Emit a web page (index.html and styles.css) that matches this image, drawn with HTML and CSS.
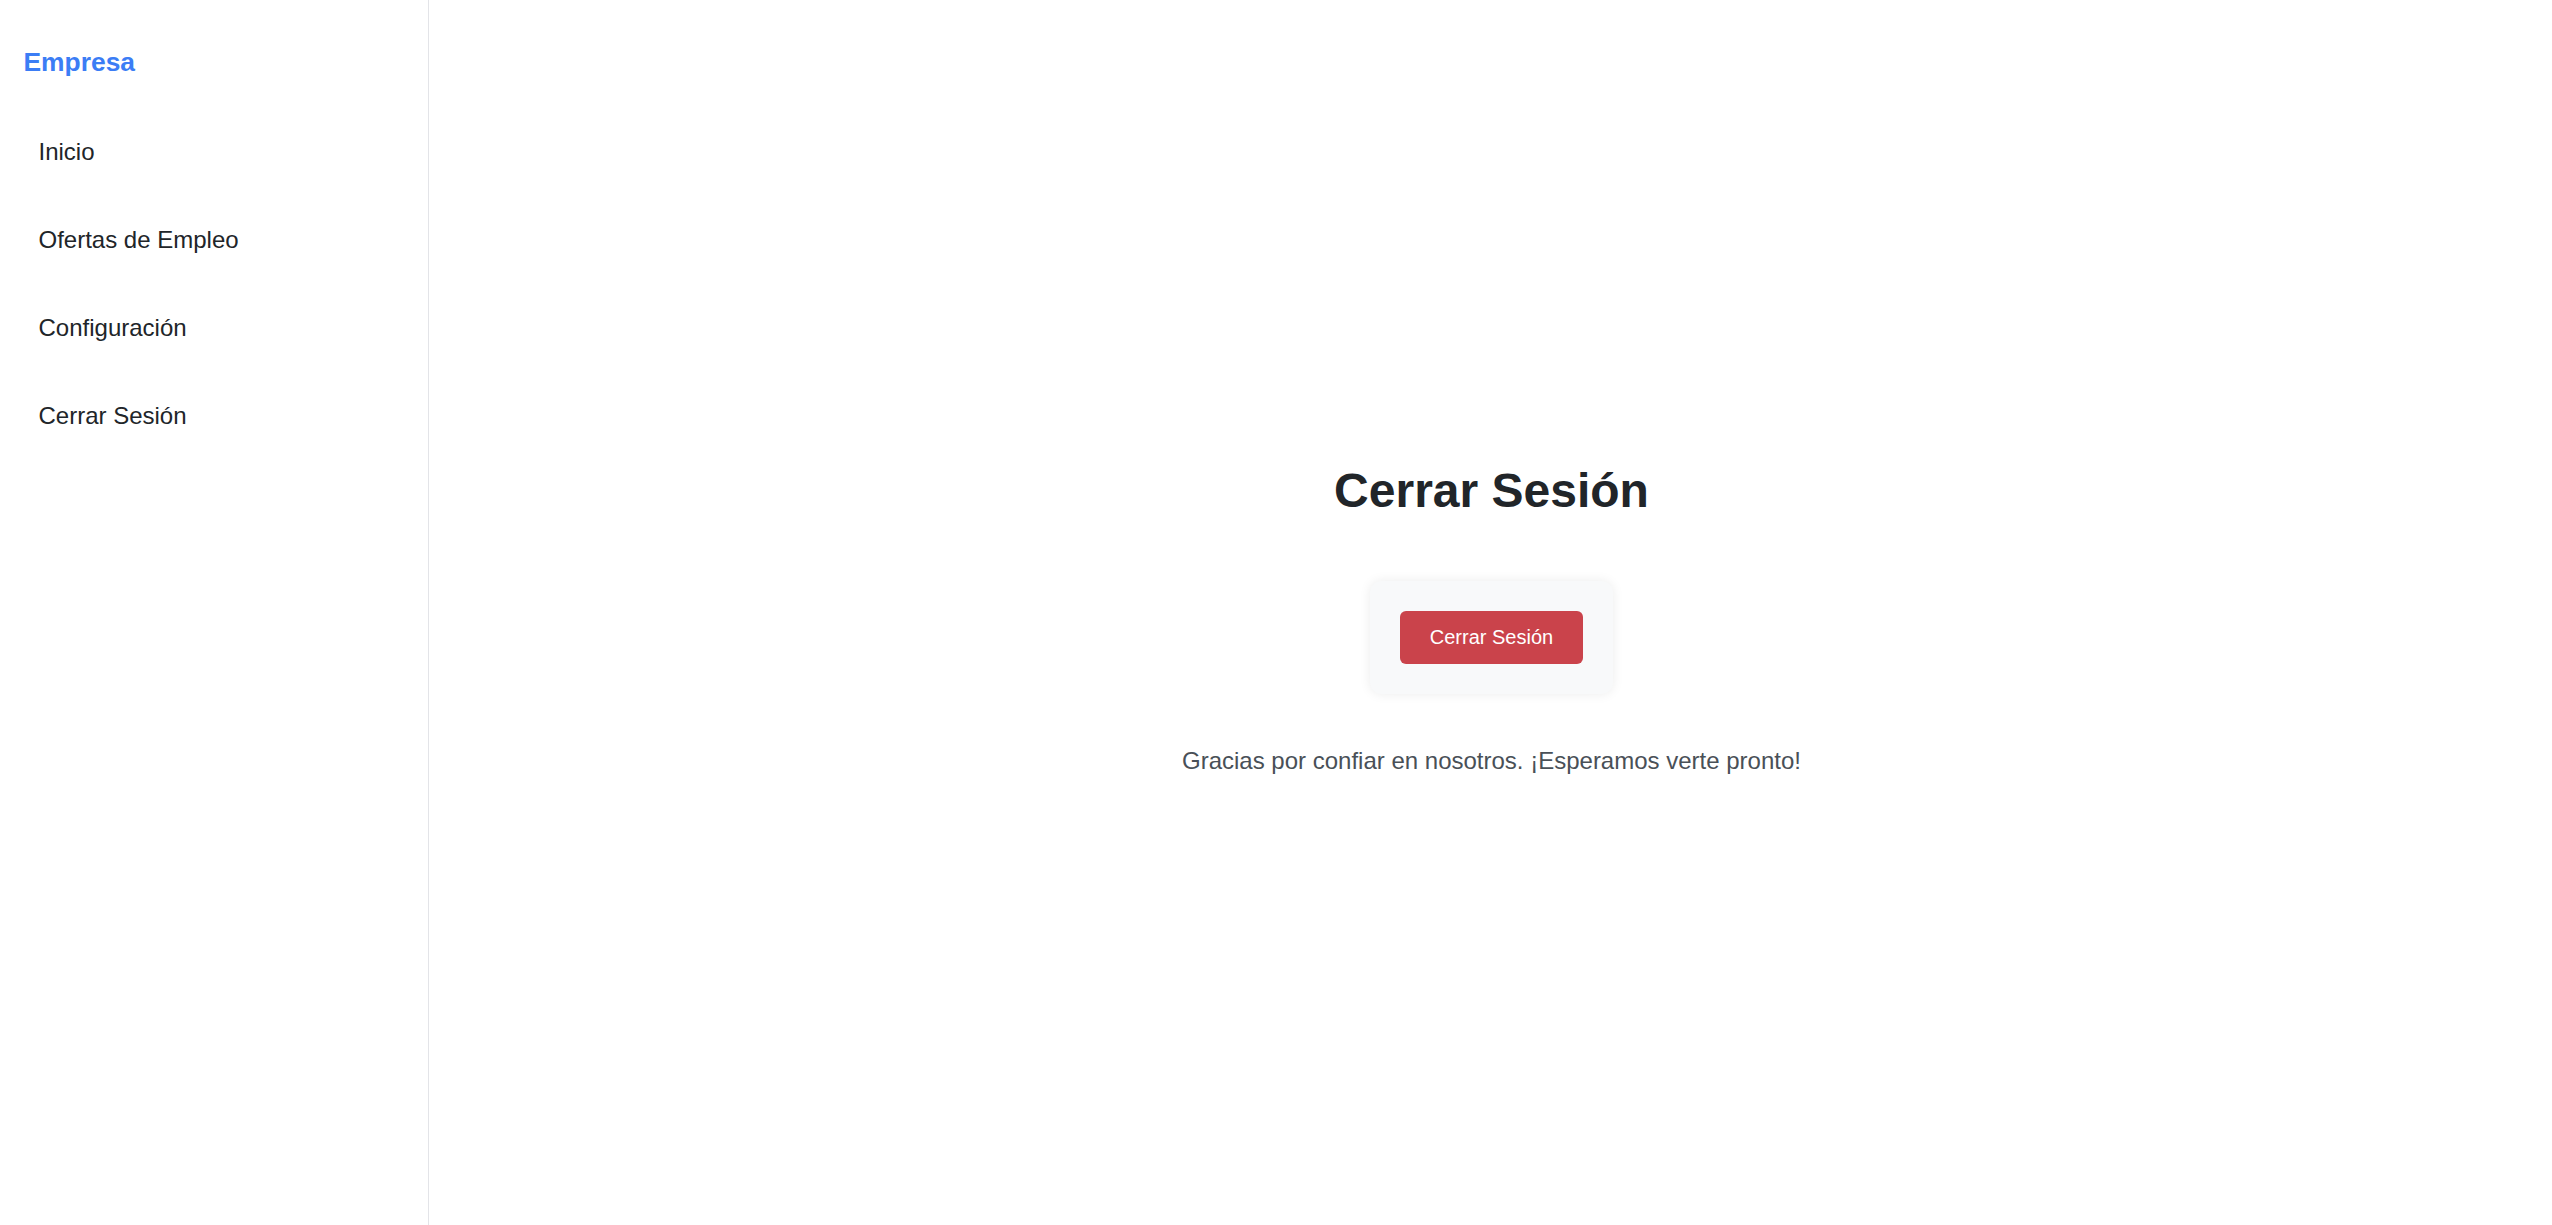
FILE: index.html
```html
<!DOCTYPE html>
<html lang="es">
<head>
<meta charset="utf-8">
<title>Cerrar Sesión</title>
<link rel="stylesheet" href="styles.css">
</head>
<body>
<div class="layout">
  <aside class="sidebar">
    <div class="brand">Empresa</div>
    <nav class="nav">
      <a class="nav-link" href="#">Inicio</a>
      <a class="nav-link" href="#">Ofertas de Empleo</a>
      <a class="nav-link" href="#">Configuración</a>
      <a class="nav-link" href="#">Cerrar Sesión</a>
    </nav>
  </aside>
  <main class="main">
    <h1 class="title">Cerrar Sesión</h1>
    <div class="card">
      <button class="btn-danger" type="button">Cerrar Sesión</button>
    </div>
    <p class="farewell">Gracias por confiar en nosotros. ¡Esperamos verte pronto!</p>
  </main>
</div>
</body>
</html>
```
FILE: styles.css
```css
* { box-sizing: border-box; }
html, body { margin: 0; padding: 0; height: 100%; }
body {
  font-family: "Liberation Sans", Arial, sans-serif;
  color: #212529;
  background: #ffffff;
}
.layout {
  display: flex;
  min-height: 100vh;
}
.sidebar {
  width: 429px;
  flex: 0 0 429px;
  border-right: 1px solid #e3e4e8;
  padding: 47px 22px 0 23.5px;
  background: #ffffff;
}
.brand {
  font-size: 26.4px;
  line-height: 30px;
  font-weight: 700;
  color: #3b7df5;
  margin-bottom: 31px;
}
.nav {
  display: flex;
  flex-direction: column;
}
.nav-link {
  display: block;
  padding: 30px 15px;
  font-size: 24px;
  line-height: 28px;
  color: #212529;
  text-decoration: none;
}
.main {
  flex: 1;
  display: flex;
  flex-direction: column;
  align-items: center;
  justify-content: center;
  padding-top: 13px;
  padding-left: 2px;
}
.title {
  margin: 0 0 62px 0;
  font-size: 48px;
  line-height: 56px;
  font-weight: 700;
  color: #212529;
}
.card {
  background: #f8f9fa;
  border-radius: 12px;
  padding: 30px;
  box-shadow: 0 0 12px rgba(0, 0, 0, 0.08);
}
.btn-danger {
  display: block;
  font-family: "Liberation Sans", Arial, sans-serif;
  font-size: 20px;
  line-height: 23px;
  padding: 15px 30px;
  color: #ffffff;
  background: #ca434b;
  border: none;
  border-radius: 6px;
  cursor: pointer;
}
.farewell {
  margin: 53px 0 0 0;
  font-size: 24px;
  line-height: 28px;
  color: #495057;
}
```
